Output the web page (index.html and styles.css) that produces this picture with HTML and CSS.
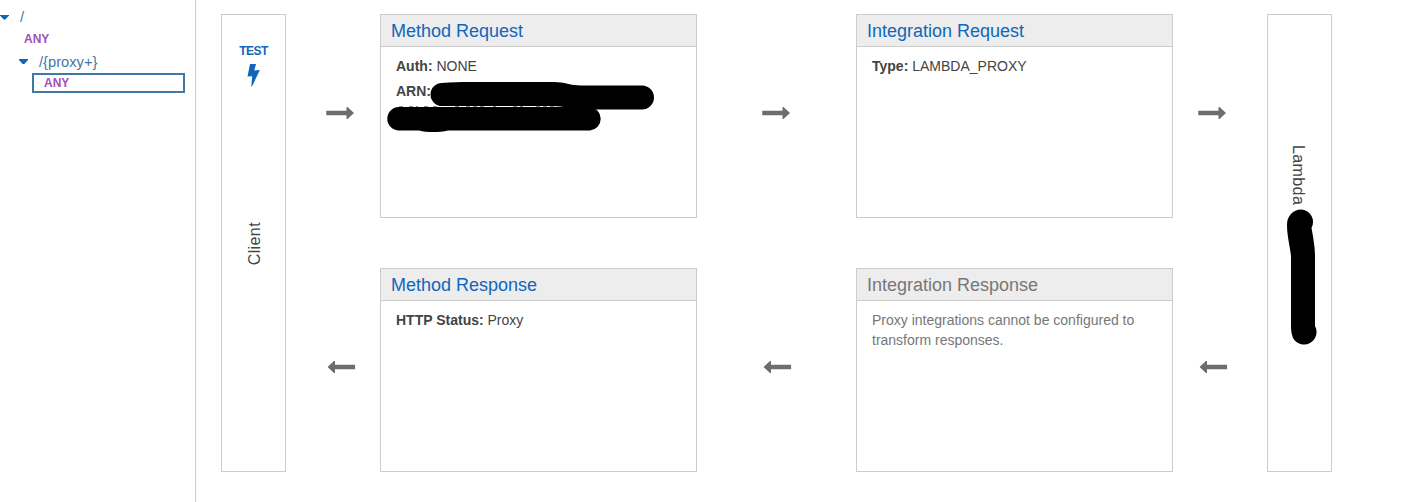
FILE: index.html
```html
<!DOCTYPE html>
<html lang="en">
<head>
<meta charset="utf-8">
<title>Method Execution</title>
<link rel="stylesheet" href="styles.css">
</head>
<body>
<svg class="defs" width="0" height="0" aria-hidden="true">
  <symbol id="arrow-right" viewBox="0 0 28 12"><path d="M0.3 3.800H20.500V0H21.500L28 6L21.500 12H20.500V8.200H0.300Z"/></symbol>
  <symbol id="arrow-left" viewBox="0 0 28 12"><path d="M27.700 3.800H7.500V0H6.500L0 6L6.500 12H7.500V8.200H27.700Z"/></symbol>
</svg>
<div class="app">
  <nav class="tree">
    <div class="node root"><i class="caret"></i><span>/</span></div>
    <div class="method top">ANY</div>
    <div class="node child"><i class="caret"></i><span>/{proxy+}</span></div>
    <div class="method selected">ANY</div>
  </nav>
  <main class="flow">
    <section class="endpoint client">
      <a class="test">TEST
        <svg class="bolt" width="13" height="23" viewBox="0 0 13 23"><path d="M3 0H9L7.300 6.400L12.900 6L5 22.500H4.300L5.200 12.300L0.500 12.600Z"/></svg>
      </a>
      <span class="vertical up">Client</span>
    </section>
    <svg class="arrow a1"><use href="#arrow-right"/></svg>
    <section class="card">
      <h2>Method Request</h2>
      <div class="body">
        <p><b>Auth:</b> NONE</p>
        <p><b>ARN:</b></p>
      </div>
      <svg class="scribble wide" width="272" height="54" viewBox="385 80 272 54">
        <path class="remnant" d="M398 106.500H402M408 106.500H417M423 106.500H427M432 106.500H436M454 106.500H458M465 106.500H485M492 106.500H495M512 106.500H522M535 106.500H556"/>
        <path d="M441 83C450 82 460 82 468 82H553C563 82 570 85.500 580 85.500H641A12 12 0 0 1 641 109.500H578C568 109.500 563 106 552 106H441A11.500 11.500 0 0 1 441 83Z"/>
        <path d="M398 107H589A11.800 11.800 0 0 1 589 130.500H447C438 132.500 426 132.500 418 130.500H398A11.750 11.750 0 0 1 398 107Z"/>
      </svg>
    </section>
    <svg class="arrow a2"><use href="#arrow-right"/></svg>
    <section class="card">
      <h2>Integration Request</h2>
      <div class="body"><p><b>Type:</b> LAMBDA_PROXY</p></div>
    </section>
    <svg class="arrow a3"><use href="#arrow-right"/></svg>
    <section class="endpoint lambda">
      <span class="vertical">Lambda</span>
      <svg class="scribble tall" width="34" height="138" viewBox="1285 208 34 138">
        <path d="M1301 209.500A12.500 12.500 0 0 1 1311.500 228C1313 236 1315 247 1315 256V326A12.500 12.500 0 1 1 1293 338Q1291 333 1291 328V256C1290 246 1287 236 1287 225A14 15 0 0 1 1301 209.500Z"/>
      </svg>
    </section>
    <svg class="arrow a1 back"><use href="#arrow-left"/></svg>
    <section class="card">
      <h2>Method Response</h2>
      <div class="body"><p><b>HTTP Status:</b> Proxy</p></div>
    </section>
    <svg class="arrow a2 back"><use href="#arrow-left"/></svg>
    <section class="card disabled">
      <h2>Integration Response</h2>
      <div class="body"><p>Proxy integrations cannot be configured to transform responses.</p></div>
    </section>
    <svg class="arrow a3 back"><use href="#arrow-left"/></svg>
  </main>
</div>
</body>
</html>
```
FILE: styles.css
```css
* { box-sizing: border-box; }
body {
  margin: 0;
  background: #fff;
  color: #444;
  font: 14px/20px "Liberation Sans", Arial, sans-serif;
  overflow: hidden;
}
.defs { position: absolute; }
.app { display: flex; height: 502px; }

.tree {
  width: 196px;
  border-right: 1px solid #ccc;
  padding-top: 6px;
  flex: none;
}
.node { display: flex; align-items: center; height: 22px; color: #4078a8; font-size: 14.7px; }
.root { gap: 11px; }
.child { gap: 11px; padding-left: 19px; height: 23px; }
.caret {
  width: 9px;
  height: 5px;
  background: #1166bb;
  clip-path: polygon(0 0, 100% 0, 100% 20%, 60% 100%, 40% 100%, 0 20%);
}
.method { font-size: 12px; font-weight: bold; color: #a54fb8; line-height: 16px; }
.top { padding: 3px 0 3px 24px; }
.selected {
  width: 153px;
  height: 20px;
  margin-left: 32px;
  padding-left: 10px;
  border: 2px solid #4078a8;
}

.flow {
  display: grid;
  grid-template-columns: 65px 94px 317px 159px 317px 94px 65px;
  grid-template-rows: 204px 204px;
  row-gap: 50px;
  padding: 14px 0 0 25px;
}
.endpoint {
  grid-row: 1 / 3;
  display: flex;
  flex-direction: column;
  align-items: center;
  border: 1px solid #ccc;
}
.client { grid-column: 1; }
.lambda { grid-column: 7; padding-top: 130px; }
.test {
  display: flex;
  flex-direction: column;
  align-items: center;
  gap: 3px;
  padding-top: 26px;
  height: 207px;
  color: #1166bb;
  font-size: 12px;
  letter-spacing: -0.6px;
  font-weight: bold;
}
.bolt { fill: currentColor; }
.vertical {
  height: 61px;
  margin-right: 3px;
  writing-mode: vertical-rl;
  font-size: 16px;
  letter-spacing: 0.4px;
}
.up { height: auto; margin: 0 0 0 2px; transform: rotate(180deg); }

.arrow { width: 28px; height: 12px; margin-top: 93px; fill: #6d6d6d; }
.a1 { margin-left: 40px; }
.a2 { margin-left: 65px; }
.a3 { margin-left: 25px; }
.back { transform: translateX(1.5px); }

.card { position: relative; border: 1px solid #ccc; }
.card h2 {
  margin: 0;
  height: 32px;
  padding-left: 10px;
  border-bottom: 1px solid #ccc;
  background: #ededed;
  color: #1166bb;
  font-size: 18px;
  font-weight: normal;
  line-height: 32px;
}
.body { padding: 9px 15px; }
.body p { margin: 0 0 5px; }
.disabled, .disabled h2 { color: #777; }

.scribble { fill: #000; }
.wide { position: absolute; left: 5px; top: 65px; }
.tall { flex: none; margin-top: 2px; margin-left: 5px; }
.remnant { fill: none; stroke: #888; stroke-width: 1; stroke-dasharray: 4 3; }
```
